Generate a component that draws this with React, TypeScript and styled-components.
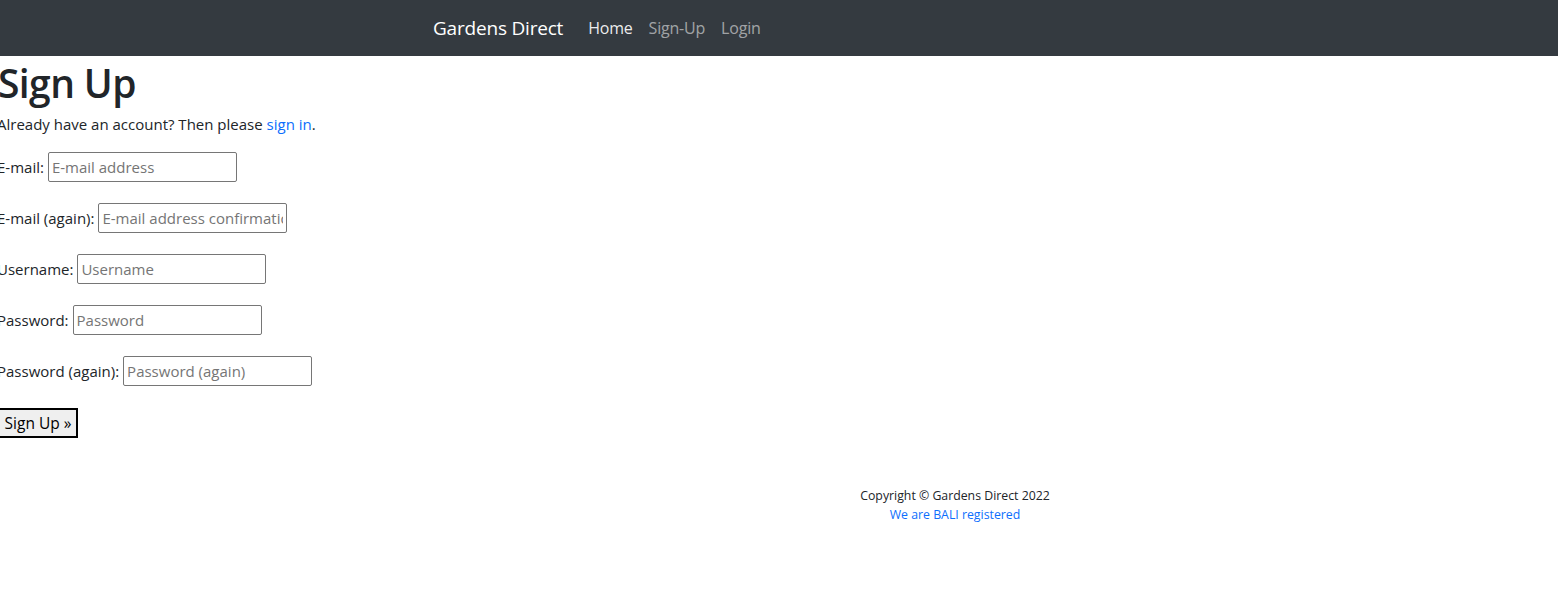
import React from "react";
import styled, { createGlobalStyle } from "styled-components";

const Global = createGlobalStyle`
  html, body { margin: 0; padding: 0; background: #fff; }
  body {
    font-family: "Open Sans", "Noto Sans", "Liberation Sans", sans-serif;
    font-size: 16px;
    line-height: 1.5;
    color: #212529;
  }
  * { box-sizing: border-box; }
`;

const Navbar = styled.nav`
  height: 56px;
  background: #343a40;
  display: flex;
  align-items: center;
  padding-left: 433px;
`;

const Brand = styled.a`
  font-size: 19px;
  color: #fff;
  text-decoration: none;
  margin-right: 17px;
  letter-spacing: -0.2px;
`;

const NavLink = styled.a<{ $active?: boolean }>`
  padding: 0 8px;
  font-size: 16px;
  letter-spacing: -0.2px;
  color: ${(p) => (p.$active ? "rgba(255,255,255,0.92)" : "rgba(255,255,255,0.55)")};
  text-decoration: none;
`;

const Main = styled.main`
  margin-left: -3px;
`;

const Title = styled.h1`
  font-size: 39px;
  font-weight: 600;
  line-height: 1.2;
  margin: 4px 0 6px 1px;
  letter-spacing: -0.6px;
`;

const Intro = styled.p`
  margin: 0 0 17px;
  font-size: 15px;
`;

const Link = styled.a`
  color: #0d6efd;
  text-decoration: none;
`;

const Form = styled.form`
  display: flex;
  flex-direction: column;
  align-items: flex-start;
  gap: 21px;
`;

const Field = styled.p`
  margin: 0;
  display: flex;
  align-items: center;
  gap: 4px;
  font-size: 15px;
`;

const Input = styled.input`
  width: 189px;
  height: 30px;
  border: 1px solid #767676;
  border-radius: 2px;
  padding: 1px 3px;
  font-family: inherit;
  font-size: 15px;
  color: #212529;
  &::placeholder { color: #757575; }
`;

const Button = styled.button`
  margin-top: 1px;
  margin-left: 1px;
  height: 30px;
  width: 80px;
  border: 2px solid #000;
  border-radius: 0;
  background: #efefef;
  font-family: inherit;
  font-size: 15.5px;
  color: #000;
  padding: 0;
`;

const Footer = styled.footer`
  margin-top: 48px;
  padding-left: 352px;
  text-align: center;
  font-size: 12.3px;
  line-height: 19px;
`;

const FooterLine = styled.div``;

export default function App() {
  return (
    <>
      <Global />
      <Navbar>
        <Brand href="#">Gardens Direct</Brand>
        <NavLink $active href="#">Home</NavLink>
        <NavLink href="#">Sign-Up</NavLink>
        <NavLink href="#">Login</NavLink>
      </Navbar>
      <Main>
        <Title>Sign Up</Title>
        <Intro>
          Already have an account? Then please <Link href="#">sign in</Link>.
        </Intro>
        <Form onSubmit={(e) => e.preventDefault()}>
          <Field>E-mail: <Input placeholder="E-mail address" /></Field>
          <Field>E-mail (again): <Input placeholder="E-mail address confirmation" /></Field>
          <Field>Username: <Input placeholder="Username" /></Field>
          <Field>Password: <Input type="password" placeholder="Password" /></Field>
          <Field>Password (again): <Input type="password" placeholder="Password (again)" /></Field>
          <Button type="submit">Sign Up »</Button>
        </Form>
      </Main>
      <Footer>
        <FooterLine>Copyright © Gardens Direct 2022</FooterLine>
        <FooterLine><Link href="#">We are BALI registered</Link></FooterLine>
      </Footer>
    </>
  );
}
